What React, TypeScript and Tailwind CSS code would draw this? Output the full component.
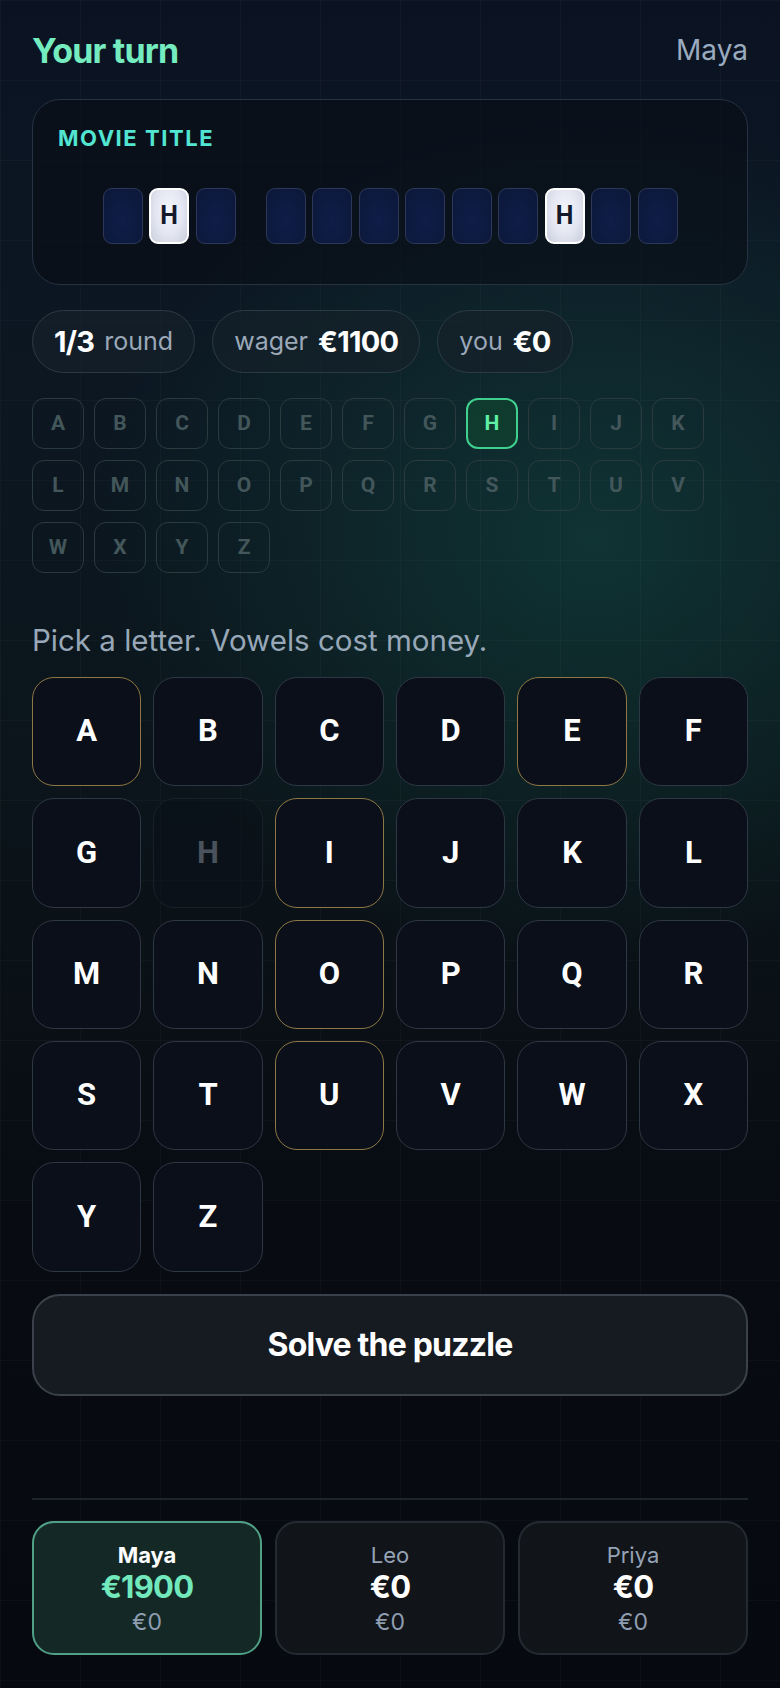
import React from "react";

const word1 = ["", "H", ""];
const word2 = ["", "", "", "", "", "", "H", "", ""];
const ALPHA = "ABCDEFGHIJKLMNOPQRSTUVWXYZ".split("");
const VOWELS = ["A", "E", "I", "O", "U"];

function Tile({ ch }: { ch: string }) {
  if (ch) {
    return (
      <div className="w-[40px] h-[56px] rounded-[9px] border-2 border-white bg-[radial-gradient(ellipse_at_50%_40%,#f4f6fd_0%,#e3e6f1_55%,#c9cddb_100%)] flex items-center justify-center font-['Roboto',sans-serif] font-bold text-[25px] text-[#141a2c]">
        {ch}
      </div>
    );
  }
  return (
    <div className="w-[40px] h-[56px] rounded-[9px] border-[1.5px] border-[#2d3859] bg-[radial-gradient(ellipse_at_50%_60%,#0f1d48_0%,#0c1839_100%)]" />
  );
}

function Chip({ value, label, valueFirst }: { value: string; label: string; valueFirst?: boolean }) {
  return (
    <div className="h-[63px] px-[21px] rounded-full border-[1.5px] border-[#2c3a44] bg-[#16212a]/70 flex items-center gap-[10px]">
      {valueFirst ? (
        <>
          <span className="text-[29px] font-bold text-white tracking-tight">{value}</span>
          <span className="text-[25px] text-[#9aa8b8]">{label}</span>
        </>
      ) : (
        <>
          <span className="text-[25px] text-[#9aa8b8]">{label}</span>
          <span className="text-[29px] font-bold text-white tracking-tight">{value}</span>
        </>
      )}
    </div>
  );
}

export default function App() {
  return (
    <div className="min-h-[1688px] w-full bg-[#070a11] bg-[radial-gradient(ellipse_500px_430px_at_76%_32%,rgba(24,112,94,0.32),transparent),linear-gradient(180deg,#0b1322_0%,#0c1722_22%,#0b151b_45%,#080c12_72%,#06090f_100%)] font-[Inter,'Noto_Sans',sans-serif]">
      <div className="min-h-[1688px] bg-[linear-gradient(rgba(255,255,255,0.022)_1px,transparent_1px),linear-gradient(90deg,rgba(255,255,255,0.022)_1px,transparent_1px)] bg-[size:80px_80px] px-8 pt-[30px] pb-[33px] flex flex-col">
        {/* Header */}
        <div className="flex items-center justify-between h-[40px]">
          <span className="text-[34px] font-bold text-[#74ecc0] tracking-tight">Your turn</span>
          <span className="text-[28px] text-[#9aabc0]">Maya</span>
        </div>

        {/* Puzzle card */}
        <div className="mt-[29px] rounded-[28px] border-[1.5px] border-[#263242] bg-[#080d16]/60 px-[25px] pt-[24px] pb-[40px]">
          <div className="text-[22px] leading-[28px] font-bold tracking-[0.07em] text-[#52e5d2]">MOVIE TITLE</div>
          <div className="mt-[36px] flex justify-center gap-[30px]">
            <div className="flex gap-[6.5px]">
              {word1.map((c, i) => (
                <Tile key={i} ch={c} />
              ))}
            </div>
            <div className="flex gap-[6.5px]">
              {word2.map((c, i) => (
                <Tile key={i} ch={c} />
              ))}
            </div>
          </div>
        </div>

        {/* Chips */}
        <div className="mt-[25px] flex gap-[17px]">
          <Chip value="1/3" label="round" valueFirst />
          <Chip value="€1100" label="wager" />
          <Chip value="€0" label="you" />
        </div>

        {/* Used letters */}
        <div className="mt-[25px] flex flex-wrap gap-x-[10px] gap-y-[11px] w-[680px]">
          {ALPHA.map((l) =>
            l === "H" ? (
              <div
                key={l}
                className="w-[52px] h-[51px] rounded-[12px] border-2 border-[#3fcf8f] bg-[#10402f]/80 flex items-center justify-center font-['Roboto',sans-serif] font-bold text-[21px] text-[#5ff0a6]"
              >
                {l}
              </div>
            ) : (
              <div
                key={l}
                className="w-[52px] h-[51px] rounded-[12px] border-[1.5px] border-[#2a3b3e] flex items-center justify-center font-['Roboto',sans-serif] font-bold text-[21px] text-[#43575b]"
              >
                {l}
              </div>
            )
          )}
        </div>

        {/* Prompt */}
        <div className="mt-[49px] text-[29.5px] leading-[36px] text-[#98a8b8]">Pick a letter. Vowels cost money.</div>

        {/* Keyboard */}
        <div className="mt-[19px] grid grid-cols-6 gap-3">
          {ALPHA.map((l) => {
            const used = l === "H";
            const vowel = VOWELS.includes(l);
            const border = used ? "border-[#19212b]" : vowel ? "border-[#8f7745]" : "border-[#2e3744]";
            const text = used ? "text-[#4a535d]" : "text-white";
            const bg = used ? "bg-[#0a0f17]/50" : "bg-[#0a0f19]";
            return (
              <div
                key={l}
                className={`aspect-square rounded-[22px] border-[1.5px] ${border} ${bg} flex items-center justify-center font-['Roboto',sans-serif] font-bold text-[31px] ${text}`}
              >
                {l}
              </div>
            );
          })}
        </div>

        {/* Solve */}
        <div className="mt-[22px] h-[102px] rounded-[28px] border-2 border-[#3a414a] bg-[#161a21] flex items-center justify-center text-[32px] font-bold text-white tracking-tight">
          Solve the puzzle
        </div>

        <div className="flex-1" />

        {/* Divider */}
        <div className="h-[2px] bg-[#1d242d]" />

        {/* Players */}
        <div className="mt-[21px] grid grid-cols-3 gap-[13px]">
          <div className="h-[134px] rounded-[22px] border-2 border-[#50a085] bg-[#142826] flex flex-col items-center justify-center">
            <div className="text-[22px] leading-[28px] font-bold text-white">Maya</div>
            <div className="text-[31px] leading-[36px] font-bold text-[#72e8bd] tracking-tight">€1900</div>
            <div className="mt-[3px] text-[23px] leading-[28px] text-[#8e9db0]">€0</div>
          </div>
          {["Leo", "Priya"].map((n) => (
            <div
              key={n}
              className="h-[134px] rounded-[22px] border-2 border-[#252a32] bg-[#111419] flex flex-col items-center justify-center"
            >
              <div className="text-[22px] leading-[28px] text-[#95a3b6]">{n}</div>
              <div className="text-[31px] leading-[36px] font-bold text-white tracking-tight">€0</div>
              <div className="mt-[3px] text-[23px] leading-[28px] text-[#8e9db0]">€0</div>
            </div>
          ))}
        </div>
      </div>
    </div>
  );
}
